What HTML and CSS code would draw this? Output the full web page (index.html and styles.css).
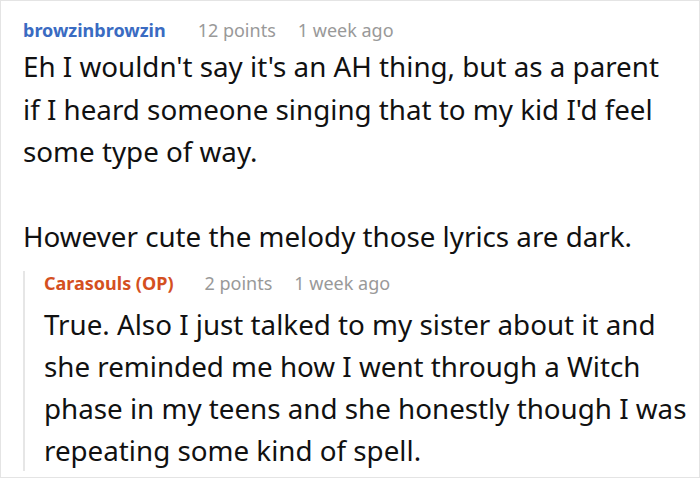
FILE: index.html
```html
<!DOCTYPE html>
<html>
<head>
<meta charset="utf-8">
<link rel="stylesheet" href="styles.css">
</head>
<body>
<div class="frame">
  <div class="comment">
    <div class="meta">
      <span class="author">browzinbrowzin</span>
      <span class="info">12 points</span>
      <span class="info">1 week ago</span>
    </div>
    <div class="body">
      <p>Eh I wouldn't say it's an AH thing, but as a parent if I heard someone singing that to my kid I'd feel some type of way.</p>
      <p>However cute the melody those lyrics are dark.</p>
    </div>
    <div class="reply">
      <div class="meta">
        <span class="author op">Carasouls (OP)</span>
        <span class="info">2 points</span>
        <span class="info">1 week ago</span>
      </div>
      <div class="body">
        <p>True. Also I just talked to my sister about it and she reminded me how I went through a Witch phase in my teens and she honestly though I was repeating some kind of spell.</p>
      </div>
    </div>
  </div>
</div>
</body>
</html>
```

FILE: styles.css
```css
html, body {
  margin: 0;
  padding: 0;
  background: #ffffff;
}
.frame {
  width: 700px;
  height: 478px;
  box-sizing: border-box;
  border: 1px solid #e4e4e4;
  overflow: hidden;
  font-family: "Noto Sans", "Open Sans", sans-serif;
  color: #111111;
}
.comment {
  padding: 17px 30px 0 22px;
}
.meta {
  display: flex;
  gap: 22px;
  font-size: 18px;
  line-height: 24px;
}
.author {
  font-weight: 700;
  color: #3a6bc2;
  margin-right: 10px;
}
.author.op {
  color: #d4501f;
}
.info {
  color: #999999;
}
.body {
  font-size: 27.75px;
  line-height: 42.6px;
  margin-top: 3px;
}
.body p {
  margin: 0 0 42.6px 0;
}
.body p:last-child {
  margin-bottom: 0;
}
.reply {
  margin-top: 25px;
  margin-right: -29px;
  border-left: 2px solid #e6e6e6;
  padding-left: 19px;
}
.reply .meta {
  margin-top: -12px;
}
.reply .author {
  margin-right: 9px;
}
.reply .body {
  line-height: 42px;
  margin-top: 8px;
  margin-bottom: -11px;
}
```
